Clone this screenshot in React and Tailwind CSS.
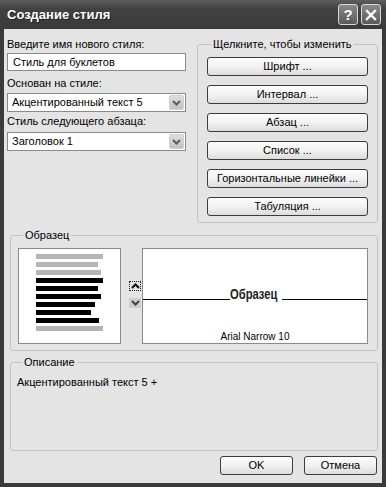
import React from "react";

function Chevron({ down = true, className = "", stroke = "#555", sw = 2 }) {
  return (
    <svg width="9" height="6" viewBox="0 0 9 6" className={className}>
      <polyline
        points={down ? "1,1 4.5,4.5 8,1" : "1,5 4.5,1.5 8,5"}
        fill="none"
        stroke={stroke}
        strokeWidth={sw}
      />
    </svg>
  );
}

function Select({ value, className = "" }) {
  return (
    <div className={"h-[19px] bg-white border border-[#8a8a8a] flex items-center " + className}>
      <span className="pl-[4px] flex-1 leading-[13px]">{value}</span>
      <div className="mr-[1px] w-[15px] h-[15px] rounded-[2px] bg-linear-to-b from-[#dedede] to-[#c2c2c2] border border-[#cfcfcf] flex items-center justify-center">
        <Chevron stroke="#5c5c5c" sw={2} />
      </div>
    </div>
  );
}

function Btn({ children, className = "" }) {
  return (
    <div
      className={
        "h-[19px] rounded-[3px] border border-[#3c3c3c] bg-linear-to-b from-[#fdfdfd] via-[#f2f2f2] to-[#dcdcdc] flex items-center justify-center leading-[13px] " +
        className
      }
    >
      {children}
    </div>
  );
}

const lines = [
  [67, "g"],
  [62, "g"],
  [65, "g"],
  [67, "b"],
  [62, "b"],
  [65, "b"],
  [59, "b"],
  [55, "b"],
  [63, "b"],
  [67, "g"],
];

export default function App() {
  return (
    <div className="w-[386px] h-[487px] flex flex-col bg-[#3a3a3a] font-['Liberation_Sans',Arial,sans-serif] text-[11px] leading-[13px] text-black overflow-hidden">
      {/* Title bar */}
      <div className="h-[29px] shrink-0 flex items-center bg-linear-to-b from-[#5e5e5e] via-[#414141] via-30% to-[#3a3a3a]">
        <span className="ml-[7px] text-white font-bold text-[13px] leading-[16px] [text-shadow:1px_1px_0_#222]">
          Создание стиля
        </span>
        <div className="ml-auto mr-[5px] flex gap-[3px]">
          <div className="w-[20px] h-[21px] rounded-[3px] border border-[#d8d8d8] bg-linear-to-b from-[#8a8a8a] to-[#5a5a5a] flex items-center justify-center text-white font-bold text-[15px] leading-none">
            ?
          </div>
          <div className="w-[20px] h-[21px] rounded-[3px] border border-[#d8d8d8] bg-linear-to-b from-[#8a8a8a] to-[#5a5a5a] flex items-center justify-center">
            <svg width="12" height="12" viewBox="0 0 12 12">
              <path d="M2 2 L10 10 M10 2 L2 10" stroke="white" strokeWidth="2.4" strokeLinecap="square" />
            </svg>
          </div>
        </div>
      </div>

      {/* Body */}
      <div className="flex-1 mx-[4px] mb-[4px] bg-[#e4e4e4] flex flex-col">
        {/* Top section */}
        <div className="flex pt-[9px] pl-[3px]">
          <div className="w-[179px] flex flex-col">
            <div>Введите имя нового стиля:</div>
            <div className="mt-[2px] h-[18px] bg-white border border-[#8a8a8a] flex items-center pl-[5px]">
              Стиль для буклетов
            </div>
            <div className="mt-[6px]">Основан на стиле:</div>
            <Select className="mt-[3px]" value="Акцентированный текст 5" />
            <div className="mt-[3px]">Стиль следующего абзаца:</div>
            <Select className="mt-[4px]" value="Заголовок 1" />
          </div>

          <fieldset className="ml-[11px] w-[181px] border border-[#c2c2c2] rounded-[3px] px-[9px] pb-[6px]">
            <legend className="ml-[4px] px-[2px] leading-[13px]">Щелкните, чтобы изменить</legend>
            <div className="mt-[6px] flex flex-col gap-[9px]">
              <Btn>Шрифт ...</Btn>
              <Btn>Интервал ...</Btn>
              <Btn>Абзац ...</Btn>
              <Btn>Список ...</Btn>
              <Btn>Горизонтальные линейки ...</Btn>
              <Btn>Табуляция ...</Btn>
            </div>
          </fieldset>
        </div>

        {/* Sample */}
        <fieldset className="mt-[6px] ml-[6px] w-[368px] border border-[#c2c2c2] rounded-[3px] pl-[7px] pb-[6px]">
          <legend className="ml-[5px] px-[2px] leading-[13px]">Образец</legend>
          <div className="mt-[6px] flex">
            <div className="w-[103px] h-[96px] bg-white border border-[#8a8a8a] pl-[17px] pt-[5px] flex flex-col gap-[3px]">
              {lines.map(([w, c], i) => (
                <div
                  key={i}
                  className={"h-[5px] " + (c === "g" ? "bg-[#b5b5b5]" : "bg-black")}
                  style={{ width: w }}
                />
              ))}
            </div>
            <div className="ml-[8px] w-[12px] flex flex-col">
              <div className="mt-[33px] h-[10px] border border-dotted border-[#222] flex items-center justify-center">
                <Chevron down={false} stroke="#111" sw={2} />
              </div>
              <div className="mt-[7px] h-[10px] bg-[#cdcdcd] flex items-center justify-center">
                <Chevron stroke="#444" sw={2} />
              </div>
            </div>
            <div className="ml-[1px] w-[226px] h-[96px] bg-white border border-[#8a8a8a] flex flex-col">
              <div className="mt-[37px] h-[16px] flex items-end">
                <div className="w-[87px] h-px bg-black mb-[2px]" />
                <div className="w-[47px] h-[16px] overflow-visible">
                  <span className="inline-block origin-left scale-x-[0.8] whitespace-nowrap font-bold text-[14px] leading-[16px] text-[#222]">
                    Образец
                  </span>
                </div>
                <div className="ml-[5px] flex-1 h-px bg-black mb-[2px]" />
              </div>
              <div className="mt-auto text-center text-[10px] leading-[12px]">Arial Narrow 10</div>
            </div>
          </div>
        </fieldset>

        {/* Description */}
        <fieldset className="mt-[5px] ml-[6px] w-[368px] h-[95px] border border-[#c2c2c2] rounded-[3px] pl-[6px]">
          <legend className="ml-[5px] px-[2px] leading-[13px]">Описание</legend>
          <div className="mt-[7px]">Акцентированный текст 5 +</div>
        </fieldset>

        {/* Buttons */}
        <div className="mt-[5px] flex justify-end gap-[11px] pr-[5px]">
          <Btn className="w-[73px]">OK</Btn>
          <Btn className="w-[73px]">Отмена</Btn>
        </div>
      </div>
    </div>
  );
}
